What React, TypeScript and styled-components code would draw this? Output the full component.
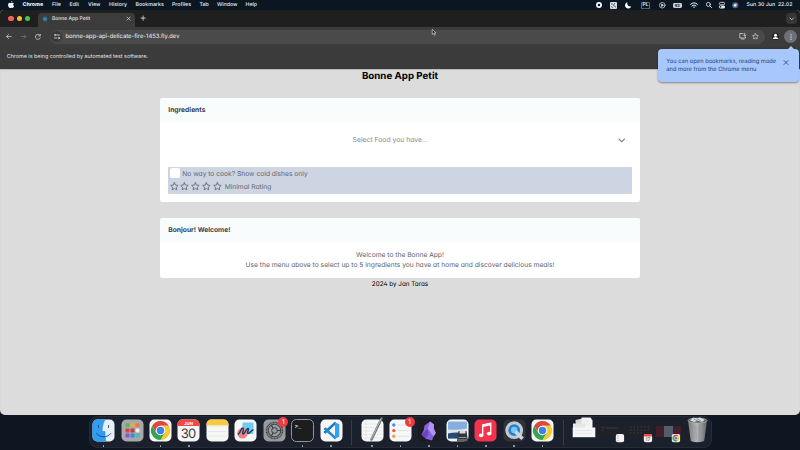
import React from 'react';
import styled, { createGlobalStyle } from 'styled-components';

const Global = createGlobalStyle`
  * { box-sizing: border-box; }
  html, body { margin: 0; padding: 0; }
  body {
    width: 800px; height: 450px; overflow: hidden; background: #0e1622;
    font-family: Inter, "Liberation Sans", sans-serif;
    text-rendering: geometricPrecision;
    -webkit-font-smoothing: antialiased;
  }
  svg { display: block; flex: none; overflow: visible; }
`;

const Desktop = styled.div`
  display: flex; flex-direction: column; width: 800px; height: 450px;
  background: #0e1622; overflow: hidden; position: relative;
`;

/* ---------- system menu bar ---------- */
const MenuBar = styled.header`
  display: flex; justify-content: space-between; align-items: center;
  height: 10px; flex: none; color: #eef1f4; background: #0b1623;
  font-size: 5.25px; font-weight: 500; line-height: 10px; white-space: nowrap;
`;
const MenuList = styled.nav`
  display: grid; align-items: center; padding-left: 8px;
  grid-template-columns: 14.5px 29.5px 17.5px 18.5px 21px 26.5px 36.5px 27.5px 17.5px 28.5px 20px;
`;
const MenuItem = styled.span<{ $strong?: boolean }>`
  font-weight: ${p => (p.$strong ? 800 : 500)};
`;
const StatusList = styled.div`
  display: grid; align-items: center; justify-items: center;
  grid-template-columns: 15px 15px 15px 19px 13.5px 17.5px 16px 13.5px 13.5px 13px 55px;
  padding-right: 3px;
`;
const InputSource = styled.span`
  width: 9.5px; height: 7px; border-radius: 1.5px; box-shadow: inset 0 0 0 .6px #9ba3ad;
  font-size: 4.8px; line-height: 7px; text-align: center; font-weight: 600;
`;
const Battery = styled.span`
  width: 9px; height: 5px; border-radius: 1.4px; background: #cdd1d6; color: #17202c;
  font-size: 4px; line-height: 5px; font-weight: 700; text-align: center;
`;

/* ---------- browser window ---------- */
const Window = styled.main`
  display: flex; flex-direction: column; height: 404.5px; flex: none;
  margin: 0 .4px; border-radius: 4px 4px 5px 5px; overflow: hidden; background: #dcdcdc;
`;
const TabStrip = styled.div`
  display: flex; height: 17px; flex: none; background: #1f1f1f; padding-left: 8px;
  align-items: center; color: #dedede;
`;
const Lights = styled.div`display: flex; gap: 3px; width: 30px;`;
const Light = styled.i<{ $color: string }>`
  width: 5.3px; height: 5.3px; border-radius: 50%; background: ${p => p.$color};
`;
const Tab = styled.div`
  display: flex; align-items: center; align-self: flex-end; width: 97px; height: 14.5px;
  background: #3c3c3c; border-radius: 4px 4px 0 0; padding: 0 5.5px 1.5px 4px; gap: 3.5px;
  font-size: 5px; font-weight: 500; color: #e2e2e2;
`;
const TabTitle = styled.span`flex: 1; white-space: nowrap;`;
const NewTab = styled.div`padding: 0 0 0 5.5px; flex: 1;`;
const TabSearch = styled.div`
  display: flex; align-items: center; justify-content: center; width: 11px; height: 11px;
  border-radius: 3.5px; background: #363636; margin-right: 2.5px;
`;
const Toolbar = styled.div`
  display: flex; align-items: center; height: 19px; flex: none; background: #3c3c3c;
  padding: 0 2.5px 0 6px; color: #d2d2d2;
`;
const NavButtons = styled.div`display: flex; gap: 9px; width: 43.5px; align-items: center;`;
const AddressBar = styled.div`
  display: flex; align-items: center; flex: 1; height: 14px; border-radius: 7px;
  background: #4a4a4a; padding: 0 6px 0 1.5px;
`;
const SiteInfo = styled.span`
  display: flex; align-items: center; justify-content: center; width: 11px; height: 11px;
  border-radius: 50%; background: #383838; margin-right: 3px;
`;
const Url = styled.span`
  flex: 1; padding-top: 1px; font-size: 5.87px; color: #f0f0f0; line-height: 14px;
`;
const BarActions = styled.div`display: flex; gap: 6px; align-items: center;`;
const Profile = styled.div`padding: 0 5px 0 7px;`;
const MoreButton = styled.div`
  display: flex; align-items: center; justify-content: center; width: 13px; height: 13px;
  border-radius: 50%; background: #6d7177;
`;
const InfoBar = styled.div`
  height: 22.5px; flex: none; background: #3b3b3b; padding-left: 6.3px;
  font-size: 5.4px; line-height: 23.5px; color: #e2e2e2;
`;

/* ---------- page ---------- */
const Page = styled.div`
  display: flex; flex-direction: column; align-items: center; flex: 1;
  color: #000; box-shadow: inset 0 1px 1px #b8b8b8;
  font-feature-settings: "cv02", "cv03", "cv04", "cv11";
`;
const Title = styled.h1`
  margin: 0; height: 29.5px; font-size: 9.72px; line-height: 15px; font-weight: 700;
  font-feature-settings: normal;
`;
const Card = styled.section<{ $height: number }>`
  width: 480px; height: ${p => p.$height}px; flex: none; background: #fff;
  border-radius: 2.5px; overflow: hidden; color: #5c636b; font-size: 6.68px;
`;
const CardHeader = styled.h2`
  margin: 0; height: 23.5px; padding-left: 8.3px; background: #f8fcfd;
  font-size: 6.7px; line-height: 25px; font-weight: 700; color: #3a414b;
`;
const Select = styled.div`
  display: flex; align-items: center; height: 37px; margin: 0 8px; padding-right: 7.5px;
  color: #85888c;
`;
const Placeholder = styled.span`
  flex: 1; padding: 0 6.5px 1px 0; text-align: center; font-size: 6.8px;
`;
const Filters = styled.div`
  margin: 8px 8px 0; height: 27px; background: #cdd5e2; padding: 0 0 0 1.5px; color: #606874;
`;
const FilterRow = styled.div`
  display: flex; align-items: center; height: 13.3px; white-space: nowrap;
`;
const FilterLabel = styled.span`padding-top: 1.2px;`;
const Checkbox = styled.span`
  width: 10px; height: 10px; border-radius: 2px; background: #fff; margin-right: 2.8px;
`;
const Stars = styled.div`display: flex; gap: 2.1px; padding-right: 2.8px;`;
const Spacer = styled.div`height: 16.5px; flex: none;`;
const Welcome = styled.p`
  margin: 0; padding-top: 8.4px; line-height: 10.1px; text-align: center; white-space: nowrap;
`;
const Footer = styled.footer`font-size: 6.3px; line-height: 12.3px;`;

/* ---------- overlays ---------- */
const Bubble = styled.aside`
  position: absolute; left: 658px; top: 49px; width: 141px; height: 33.3px;
  display: flex; justify-content: space-between; padding: 8.9px 11px 0 8.3px;
  border-radius: 4px; background: #a8c7fa; color: #1c437f;
  font-size: 5.75px; line-height: 8.6px; box-shadow: 0 .5px 2px #0006; white-space: nowrap;
  &::before {
    content: ""; position: absolute; right: 4.5px; top: -3.5px;
    border: 4px solid transparent; border-top: 0; border-bottom-color: #a8c7fa;
  }
`;
const Pointer = styled.div`position: absolute; left: 431.5px; top: 28.5px;`;

/* ---------- dock ---------- */
const Dock = styled.footer`
  display: flex; align-items: stretch; width: 623px; height: 32px; flex: none;
  margin: 1.5px 0 0 88.5px; padding-left: .9px; border-radius: 9px; background: #1a212c;
  box-shadow: inset 0 0 0 .6px #2f3641;
`;
const DockItem = styled.div<{ $running?: boolean }>`
  position: relative; width: 28.45px; display: flex; justify-content: center; padding-top: 3px;
  &::after {
    content: ""; position: absolute; bottom: 1px; width: 1.6px; height: 1.6px;
    border-radius: 50%; background: ${p => (p.$running ? '#aab0b8' : 'transparent')};
  }
`;
const DockRule = styled.div`
  width: 12.5px; display: flex; justify-content: center; padding: 3.5px 0;
  &::before { content: ""; width: 1px; background: #353c47; }
`;
const Badge = styled.span`
  position: absolute; right: .2px; top: 1px; width: 10px; height: 10px; border-radius: 50%;
  background: #ee3a42; color: #fff; font-size: 6.5px; line-height: 10px; text-align: center;
`;

const line = { fill: 'none', stroke: 'currentColor', strokeLinecap: 'round', strokeLinejoin: 'round' } as const;

const Close = ({ size = 3.2, width = 0.8 }) => (
  <svg width={size} height={size} viewBox="0 0 4 4" {...line} strokeWidth={width}><path d="M0 0L4 4M4 0L0 4" /></svg>
);
const Chevron = ({ size = 6, width = 0.9 }) => (
  <svg width={size} height={size / 2} viewBox="0 0 6 3" {...line} strokeWidth={width}><path d="M0 0L3 3L6 0" /></svg>
);
const Star = ({ size = 8.8, width = 2.3 }) => (
  <svg width={size} height={size} viewBox="0 0 24 24" {...line} strokeWidth={width}>
    <path d="M12 1.8l3.1 6.4 7.1 1-5.1 5 1.2 7L12 17.9l-6.3 3.3 1.2-7-5.1-5 7.1-1z" />
  </svg>
);
const Apple = () => (
  <svg width="6.2" height="7.2" viewBox="0 0 17 20" fill="currentColor">
    <path d="M12 0c.2 2-1.7 4.2-3.7 4.1C8 2.200 10 .2 12 0zM8.600 5.700c1 0 2-1.100 4-1.100 1.500 0 2.900.8 3.700 2-3.200 1.900-2.700 6.200.6 7.400-.7 2-2.400 5.500-4.500 5.500-1.400 0-1.900-.9-3.600-.9s-2.300.9-3.600.9C2.700 19.500 0 14.900 0 11.200 0 7.200 2.500 5 4.900 5c1.600 0 2.700.8 3.700.7z" />
  </svg>
);

const Tile = ({ fill = '#f7f7f7', stroke, children }: { fill?: string; stroke?: string; children?: React.ReactNode }) => (
  <svg width="23" height="23" viewBox="0 0 23 23">
    <rect x=".5" y=".5" width="22" height="22" rx="4.8" fill={fill} stroke={stroke} strokeWidth="1" />
    {children}
  </svg>
);

const ChromeMark = () => (
  <>
    <path d="M-7.800-4.500A9 9 0 0 1 7.800-4.500H0L-3.900 2.250Z" fill="#e2453a" />
    <path transform="rotate(120)" d="M-7.800-4.500A9 9 0 0 1 7.800-4.500H0L-3.900 2.250Z" fill="#f9c92e" />
    <path transform="rotate(240)" d="M-7.800-4.500A9 9 0 0 1 7.800-4.500H0L-3.900 2.250Z" fill="#35a352" />
    <circle r="4.500" fill="#fff" /><circle r="3.500" fill="#3f7fe8" />
  </>
);
const ChromeIcon = () => <Tile><g transform="translate(11.500 11.500) scale(1.06)"><ChromeMark /></g></Tile>;

const Finder = () => (
  <Tile fill="#e4eff8">
    <path d="M5.300.5H13C10.500 5 10.200 9 10.200 12.500H13c0 4 .2 7 1 10H5.300A4.800 4.800 0 0 1 .5 17.700V5.300A4.800 4.800 0 0 1 5.300.5z" fill="#2e9df3" />
    <path d="M6.500 6.500v2M16.500 6.500v2M4.500 14.500c3.500 4.500 11 4.500 14.300 0" fill="none" stroke="#16476f" strokeWidth=".9" strokeLinecap="round" />
    <path d="M13 .8C10.500 5 10.200 9 10.200 12.500H13c0 4 .2 7 1 9.700" fill="none" stroke="#2f78b4" strokeWidth=".5" />
  </Tile>
);
const Launchpad = () => (
  <Tile fill="#a5a8ad">
    {['#55bb55', '#f4a43a', '#ee7b3d', '#d74343', '#c63b49', '#ececec', '#8a55cc', '#3c86dc', '#41c3ae'].map((c, i) => (
      <rect key={c} x={4.5 + (i % 3) * 5} y={4.3 + Math.floor(i / 3) * 5.1} width="4" height="4" rx="1" fill={c} />
    ))}
  </Tile>
);
const Calendar = () => (
  <Tile>
    <path d="M.5 7V5.300A4.800 4.800 0 0 1 5.300.5h12.400a4.800 4.800 0 0 1 4.800 4.800V7z" fill="#ef4a43" />
    <text x="11.5" y="5.7" textAnchor="middle" fontSize="4.3" fontWeight="700" fill="#fff">JUN</text>
    <text x="11.2" y="19" textAnchor="middle" fontSize="13" letterSpacing="-.6" fill="#3a3a3a">30</text>
  </Tile>
);
const Notes = () => (
  <Tile>
    <path d="M.5 6.300V5.300A4.800 4.800 0 0 1 5.300.5h12.400a4.800 4.800 0 0 1 4.800 4.800v1z" fill="#f8ca3d" />
    <path d="M.5 7h22M2.500 12.500h18M2.500 17h18" stroke="#d9d4ca" strokeWidth=".5" />
  </Tile>
);
const Freeform = () => (
  <Tile>
    <rect x="8.500" y="3.500" width="11" height="11.500" rx="1" fill="#6dcdf2" />
    <circle cx="8.500" cy="14.200" r="5.300" fill="#ef837e" />
    <path d="M4.500 15C6.500 14 7 8.500 8.800 9s-1.300 6.500.5 6S12.500 9 14 9.500s-1.600 4.700 0 5 2.500-2.500 5-3.700" fill="none" stroke="#1e3768" strokeWidth="1.400" strokeLinecap="round" />
  </Tile>
);
const Settings = () => (
  <Tile fill="#989a9e">
    <g transform="translate(11.500 11.500)" fill="none" stroke="#3b3d40">
      <circle r="8" strokeWidth="1.500" strokeDasharray="1 .5" /><circle r="6.300" strokeWidth="1" /><circle r="2.800" strokeWidth="1" />
      <path d="M2.500 0H6.500M-1.300-2.200L-3.300-5.600M-1.300 2.200L-3.300 5.600" strokeWidth="1.100" />
    </g>
  </Tile>
);
const Terminal = () => (
  <Tile fill="#1c1d1f" stroke="#929497">
    <text x="3.8" y="8.5" fontSize="5.5" fontWeight="700" fill="#eee" fontFamily="Liberation Mono, monospace">&gt;_</text>
  </Tile>
);
const Code = () => (
  <Tile>
    <path d="M15.500 4.500L5.500 14 4.300 13.100 15 3.500z" fill="#1e79bf" stroke="#1e79bf" strokeWidth="1.300" strokeLinejoin="round" />
    <path d="M15.500 18.500L5.500 9 4.300 9.900 15 19.500z" fill="#2489d2" stroke="#2489d2" strokeWidth="1.300" strokeLinejoin="round" />
    <path d="M15 3.300l4.300 2v12.400l-4.300 2z" fill="#36a1ee" />
  </Tile>
);
const TextEdit = () => (
  <Tile>
    <path d="M2 5h19M2 8.500h19M2 12h19M2 15.500h19M2 19h19M5 1v21" stroke="#d5d7d9" strokeWidth=".5" />
    <path d="M20.500-.5L10.500 20.500" stroke="#6e747c" strokeWidth="2.500" strokeLinecap="round" />
    <path d="M20-.3L10.500 20" stroke="#b3b8be" strokeWidth="1" />
  </Tile>
);
const Reminders = () => (
  <Tile>
    {['#3e91ed', '#ef593f', '#f3a23a'].map((c, i) => (
      <g key={c}><circle cx="4.800" cy={6 + i * 5.6} r="1.700" fill={c} /><path d={`M8.500 ${6 + i * 5.6}H20`} stroke="#d2d2d2" strokeWidth=".6" /></g>
    ))}
  </Tile>
);
const Obsidian = () => (
  <Tile fill="#1c1c20">
    <path d="M13 2.500L7.500 6.500 6.800 11 4.500 15.500l4.200 4.300 6.300 1.700 1.500-4L18.800 14l-2-4.500.2-4z" fill="#8462dd" />
    <path d="M13 2.500l-2.300 7.200L16.500 17.500 18.800 14l-2-4.500.2-4z" fill="#af94f2" />
    <path d="M4.500 15.500l6.200-5.800.8 5.300-2.800 4.800z" fill="#6945bd" />
  </Tile>
);
const Preview = () => (
  <Tile fill="#f1f4f7">
    <rect x="2" y="2.500" width="19" height="17" rx="1" fill="#86afe0" />
    <path d="M2 10.500q9 1 19-1V15H2z" fill="#dce6ed" /><path d="M2 14.500q8-2 19 0v5H2z" fill="#284c78" />
    <path d="M12.500 12h8l1.500 10.500h-11z" fill="#33363b" /><path d="M13.500 11.500h6v3h-6z" fill="#d8d8d8" /><path d="M12.500 18.500h8M12 21h9" stroke="#a8acb2" strokeWidth=".8" />
  </Tile>
);
const Music = () => (
  <Tile fill="#f5334f">
    <path d="M8.700 16V6l8-1.700v10" fill="none" stroke="#fff" strokeWidth="1.400" /><path d="M8.700 6.800l8-1.700" stroke="#fff" strokeWidth="2.600" />
    <ellipse cx="7.100" cy="16.300" rx="2.300" ry="1.900" fill="#fff" /><ellipse cx="15.100" cy="14.600" rx="2.300" ry="1.900" fill="#fff" />
  </Tile>
);
const QuickTime = () => (
  <Tile fill="#303338">
    <circle cx="11.200" cy="11.200" r="7.400" fill="#2b7fc4" stroke="#bfcbd6" strokeWidth="3" />
    <circle cx="11.200" cy="11" r="3.200" fill="#79c8f3" /><path d="M12.500 12.500l7 7.300" stroke="#c9d6e2" strokeWidth="3.600" />
  </Tile>
);
const Documents = () => (
  <svg width="24" height="23" viewBox="0 0 24 23">
    <path d="M3.500 1l9-2 2 10H4z" fill="#d9dadb" /><path d="M9.500-1.500h9l2 3V12h-11z" fill="#f4f4f4" /><path d="M1 4.500h12V17H1z" fill="#e6e7e8" />
    <path d="M.7 8.500h22.600v9.700H.7z" fill="#f6f6f6" /><path d="M3 11.500h17M3 14.500h17M11 2h6M11 5h7" stroke="#dcdddf" strokeWidth=".6" />
  </svg>
);
const Thumb = ({ kind }: { kind: 'list' | 'calendar' | 'chrome' }) => (
  <svg width="25" height="23" viewBox="0 0 25 23">
    <rect x="0" y={kind === 'list' ? 6.5 : 5} width="25" height={kind === 'list' ? 11 : 13} fill="#202126" />
    {kind === 'list' && <path d="M1.500 8.500h3M6 9h12M1.500 11h2" stroke="#474a50" strokeWidth=".6" />}
    {kind === 'calendar' && <path d="M2 8h20M2 11h20M2 14h13" stroke="#4b4d52" strokeWidth=".7" strokeDasharray="1.500 2" />}
    {kind === 'chrome' && <><path d="M0 7h25v11H0z" fill="#401f2b" /><path d="M8 7h9v11H8z" fill="#535e6c" /></>}
    <rect x="15.800" y="15" width="8.300" height="8.300" rx="2" fill="#f4f4f4" />
    {kind === 'list' && <path d="M17.500 17h1M17.500 19.300h1M17.500 21.500h1" stroke="#b77a92" strokeWidth=".9" />}
    {kind === 'calendar' && <><path d="M15.800 17.500V17a2 2 0 0 1 2-2h4.300a2 2 0 0 1 2 2v.5z" fill="#ed5048" /><text x="19.95" y="22.3" textAnchor="middle" fontSize="4.8" fill="#333">17</text></>}
    {kind === 'chrome' && <g transform="translate(19.950 19.150) scale(.4)"><ChromeMark /></g>}
  </svg>
);
const Trash = () => (
  <svg width="23" height="25" viewBox="0 0 23 25">
    <defs><linearGradient id="bin"><stop stopColor="#797b7d" /><stop offset=".45" stopColor="#b4b6b7" /><stop offset="1" stopColor="#646668" /></linearGradient></defs>
    <path d="M2 1.500h19L18.200 22q-6.700 2.500-13.400 0z" fill="url(#bin)" />
    <ellipse cx="11.500" cy="1.500" rx="9.500" ry="2.400" fill="#4c5053" stroke="#bfc2c4" strokeWidth=".7" />
    <path d="M4 1.500l3-3 4 1 3-1 5 2.500-3 2-4-1-4 1z" fill="#d5d9da" /><path d="M8-.5l2 2 3-1 2 2" stroke="#5c8d86" strokeWidth=".9" fill="none" />
    <path d="M6 6l1.200 14M9.800 6.500l.4 14M13.500 6.500l-.4 14M17 6l-1.200 14" stroke="#8a8c8e" strokeWidth=".6" />
  </svg>
);

const menus = ['File', 'Edit', 'View', 'History', 'Bookmarks', 'Profiles', 'Tab', 'Window', 'Help'];

type Entry = { icon: React.ReactNode; running?: boolean; badge?: string };
const apps: Entry[] = [
  { icon: <Finder />, running: true }, { icon: <Launchpad /> }, { icon: <ChromeIcon />, running: true },
  { icon: <Calendar />, running: true }, { icon: <Notes /> }, { icon: <Freeform /> },
  { icon: <Settings />, badge: '1' }, { icon: <Terminal />, running: true }, { icon: <Code />, running: true },
];
const recent: Entry[] = [
  { icon: <TextEdit />, running: true }, { icon: <Reminders />, running: true, badge: '1' }, { icon: <Obsidian />, running: true },
  { icon: <Preview />, running: true }, { icon: <Music />, running: true }, { icon: <QuickTime />, running: true }, { icon: <ChromeIcon />, running: true },
];
const shelf: Entry[] = [
  { icon: <Documents /> }, { icon: <Thumb kind="list" /> }, { icon: <Thumb kind="calendar" /> }, { icon: <Thumb kind="chrome" /> }, { icon: <Trash /> },
];
const DockGroup = ({ items }: { items: Entry[] }) => (
  <>{items.map((it, i) => <DockItem key={i} $running={it.running}>{it.icon}{it.badge && <Badge>{it.badge}</Badge>}</DockItem>)}</>
);

export default function App() {
  return (
    <Desktop>
      <Global />
      <MenuBar>
        <MenuList>
          <Apple />
          <MenuItem $strong>Chrome</MenuItem>
          {menus.map(m => <MenuItem key={m}>{m}</MenuItem>)}
        </MenuList>
        <StatusList>
          <svg width="6" height="6" viewBox="0 0 6 6"><circle cx="3" cy="3" r="2.100" fill="none" stroke="#fff" strokeWidth="1.700" /></svg>
          <svg width="7" height="7" viewBox="0 0 7 7"><rect width="7" height="7" rx="1" fill="#d9dcdf" /><path d="M1 2h2l2 3h1M4.500 1v1.500M1 4.500l2 1" stroke="#384350" strokeWidth=".7" fill="none" /></svg>
          <svg width="6.500" height="6.500" viewBox="0 0 7 7"><path d="M2.500.2A3.500 3.500 0 1 0 6.800 4.800 3.600 3.600 0 0 1 2.500.2z" fill="#fff" /></svg>
          <InputSource>PL</InputSource>
          <svg width="6.500" height="6.500" viewBox="0 0 7 7" {...line} strokeWidth=".7"><circle cx="3.500" cy="3.500" r="3" /><path d="M3 2.300L4.800 3.500 3 4.700z" fill="currentColor" /></svg>
          <Battery>62</Battery>
          <svg width="8" height="6" viewBox="0 0 8 6" {...line} strokeWidth="1"><path d="M.6 2.300Q4-.8 7.400 2.300M2 3.800Q4 2 6 3.800M3.700 5.200h.6" /></svg>
          <svg width="6" height="6" viewBox="0 0 6 6" {...line} strokeWidth=".8"><circle cx="2.400" cy="2.400" r="2" /><path d="M3.900 3.900L5.700 5.700" /></svg>
          <svg width="6" height="6.500" viewBox="0 0 6 6.500"><rect x=".4" y=".4" width="5.200" height="2.300" rx="1.100" fill="none" stroke="#e7eaed" strokeWidth=".8" /><rect y="3.400" width="6" height="3" rx="1.400" fill="#e7eaed" /><circle cx="1.600" cy="4.900" r=".8" fill="#222" /></svg>
          <svg width="6.500" height="6.500" viewBox="0 0 7 7"><circle cx="3.500" cy="3.500" r="3.300" fill="#376ca6" /><path d="M1.500 4.500Q2 1 5.500 1.500 6 4 3.500 5z" fill="#e46f7a" /><circle cx="3.300" cy="3.500" r="1.300" fill="#d9f1ff" /></svg>
          <span>Sun 30 Jun&nbsp; 22.02</span>
        </StatusList>
      </MenuBar>

      <Window>
        <TabStrip>
          <Lights><Light $color="#f4605a" /><Light $color="#f8bd35" /><Light $color="#3fc950" /></Lights>
          <Tab>
            <svg width="6" height="6" viewBox="0 0 6 6"><rect width="6" height="6" rx="1" fill="#263b45" /><circle cx="3" cy="3" r=".7" fill="#63bdd3" /><g fill="none" stroke="#5199ad" strokeWidth=".4"><ellipse cx="3" cy="3" rx="2.500" ry="1" /><ellipse cx="3" cy="3" rx="2.500" ry="1" transform="rotate(60 3 3)" /><ellipse cx="3" cy="3" rx="2.500" ry="1" transform="rotate(120 3 3)" /></g></svg>
            <TabTitle>Bonne App Petit</TabTitle>
            <Close />
          </Tab>
          <NewTab><svg width="4.200" height="4.200" viewBox="0 0 4 4" {...line} strokeWidth=".8"><path d="M2 0V4M0 2H4" /></svg></NewTab>
          <TabSearch><Chevron size={3.6} width={1.3} /></TabSearch>
        </TabStrip>
        <Toolbar>
          <NavButtons>
            <svg width="5.500" height="5" viewBox="0 0 6 5" {...line} strokeWidth=".8"><path d="M5.700 2.500H.7M2.800.3L.6 2.500 2.800 4.700" /></svg>
            <svg width="5.500" height="5" viewBox="0 0 6 5" {...line} strokeWidth=".8" opacity=".4"><path d="M.3 2.500H5.300M3.200.3L5.400 2.500 3.200 4.700" /></svg>
            <svg width="6" height="6" viewBox="0 0 6 6" {...line} strokeWidth=".8"><path d="M5.300 3.800A2.500 2.500 0 1 1 5 1.400M5.300.3V1.900H3.700" /></svg>
          </NavButtons>
          <AddressBar>
            <SiteInfo><svg width="6" height="5" viewBox="0 0 6 5" {...line} strokeWidth=".8"><circle cx="1.200" cy="1" r=".8" /><path d="M3.200 1H5.800M.2 4H2.800" /><circle cx="4.800" cy="4" r=".8" /></svg></SiteInfo>
            <Url>bonne-app-api-delicate-fire-1453.fly.dev</Url>
            <BarActions>
              <svg width="7.500" height="6.500" viewBox="0 0 7.500 6.500" {...line} strokeWidth=".8"><path d="M4 .5H.8V5H6.500V4M2.500 6h2.700M5.700.3V3M4.500 2L5.700 3.200 6.900 2" /></svg>
              <Star size={6.8} width={2.4} />
            </BarActions>
          </AddressBar>
          <Profile><svg width="7" height="7" viewBox="0 0 7 7"><rect width="7" height="7" rx="3.500" fill="#202124" /><circle cx="3.500" cy="2.200" r="1.500" fill="#fff" /><path d="M.7 6Q1 4 3.500 4T6.300 6z" fill="#fff" /></svg></Profile>
          <MoreButton><svg width="2" height="6" viewBox="0 0 2 6" fill="#c4daff"><circle cx="1" cy=".8" r=".7" /><circle cx="1" cy="3" r=".7" /><circle cx="1" cy="5.200" r=".7" /></svg></MoreButton>
        </Toolbar>
        <InfoBar>Chrome is being controlled by automated test software.</InfoBar>

        <Page>
          <Title>Bonne App Petit</Title>
          <Card $height={103.5}>
            <CardHeader>Ingredients</CardHeader>
            <Select><Placeholder>Select Food you have...</Placeholder><Chevron size={5.5} width={1.2} /></Select>
            <Filters>
              <FilterRow><Checkbox /><FilterLabel>No way to cook? Show cold dishes only</FilterLabel></FilterRow>
              <FilterRow>
                <Stars>{[0, 1, 2, 3, 4].map(n => <Star key={n} />)}</Stars>
                <FilterLabel>Minimal Rating</FilterLabel>
              </FilterRow>
            </Filters>
          </Card>
          <Spacer />
          <Card $height={60}>
            <CardHeader>Bonjour! Welcome!</CardHeader>
            <Welcome>Welcome to the Bonne App!<br />Use the menu above to select up to 5 ingredients you have at home and discover delicious meals!</Welcome>
          </Card>
          <Footer>2024 by Jan Taras</Footer>
        </Page>
      </Window>

      <Dock>
        <DockGroup items={apps} />
        <DockRule />
        <DockGroup items={recent} />
        <DockRule />
        <DockGroup items={shelf} />
      </Dock>

      <Bubble>
        <div>You can open bookmarks, reading mode<br />and more from the Chrome menu</div>
        <svg width="4" height="8" viewBox="0 -2.500 4 8" {...line} strokeWidth=".8"><path d="M0 0L4 4M4 0L0 4" /></svg>
      </Bubble>
      <Pointer>
        <svg width="4" height="6.500" viewBox="0 0 8 13"><path d="M.5.5V10.500L3 8.300 4.800 12.500 6.500 11.700 4.700 7.700H8z" fill="#111" stroke="#eee" strokeWidth="1.200" /></svg>
      </Pointer>
    </Desktop>
  );
}
